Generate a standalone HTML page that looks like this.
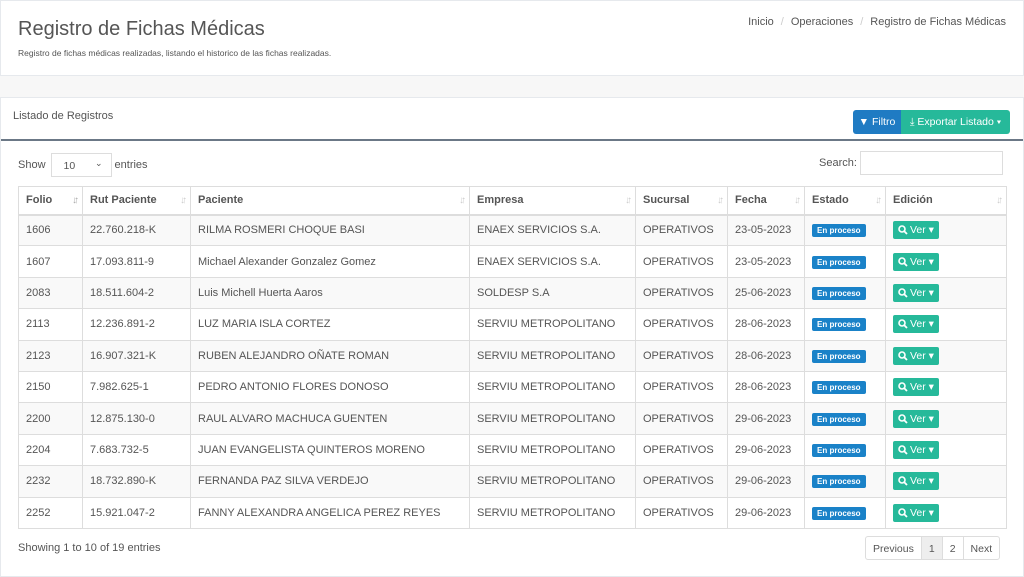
<!DOCTYPE html>
<html><head><meta charset="utf-8"><style>
*{box-sizing:border-box;margin:0;padding:0}
body{width:1024px;height:568px;overflow:hidden;background:#f7f7f7;font-family:"Liberation Sans",sans-serif;color:#73879c;font-size:11px}
.top{position:absolute;left:0;top:0;width:1024px;height:76px;background:#fff;border:1px solid #e6e9ed}
.top h1{position:absolute;left:17px;top:17px;font-size:20px;font-weight:normal;color:#555}
.top p{position:absolute;left:17px;top:47px;font-size:8.5px;color:#555}
.bc{position:absolute;right:17px;top:15px;font-size:11px;color:#555}
.bc span{color:#ccc;margin:0 7px}
.panel{position:absolute;left:0;top:97px;width:1024px;height:480px;background:#fff;border:1px solid #e6e9ed}
.ptitle{position:absolute;left:12px;top:12px;font-size:11px;color:#555}
.hr{position:absolute;left:0;top:41px;width:1022px;height:2px;background:#6b7886}
.btns{position:absolute;left:852px;top:12px;display:flex;height:24px}
.b1{background:#1f7bc3;color:#fff;width:48px;border-radius:3px 0 0 3px;display:flex;align-items:center;justify-content:center;font-size:10.5px}
.b2{background:#26b99a;color:#fff;width:109px;border-radius:0 3px 3px 0;display:flex;align-items:center;justify-content:center;font-size:10.5px}
.show{position:absolute;left:17px;top:55px;font-size:11px;color:#555;display:flex;align-items:center}
.sel{display:inline-block;width:61px;height:24px;border:1px solid #ddd;margin:0 3px 0 5px;padding:6px 0 0 12px;font-size:10.5px;position:relative}
.srch{position:absolute;left:818px;top:59px;color:#555}
.srch i{position:absolute;left:41px;top:-6px;width:143px;height:24px;border:1px solid #ddd}
table{position:absolute;left:17px;top:88px;border-collapse:collapse;font-size:11px;color:#555}
td,th{border:1px solid #ddd;padding:0 7px;text-align:left;white-space:nowrap}
th{height:28px;font-weight:bold;border-bottom:2px solid #ddd;position:relative}
th:after{content:"↓↑";position:absolute;right:6px;top:8px;font-size:10px;color:#ccc;letter-spacing:-3px}
th:first-child:after{color:#aaa}
td{height:31.4px}
tr:nth-child(even) td{background:#f9f9f9}
.ep{background:#1a82c8;color:#fff;font-size:8px;font-weight:bold;padding:2px 5px;border-radius:2px}
.ver{background:#26b99a;color:#fff;font-size:10.5px;padding:3px 5px;border-radius:2px;display:inline-flex;align-items:center;gap:2px}
.foot{position:absolute;left:17px;top:444px;color:#555}
.pg{position:absolute;left:864px;top:438px;display:flex;height:24px;border:1px solid #ddd;border-radius:3px;color:#555;font-size:10.5px}
.pg div{padding:6px 7px;border-left:1px solid #ddd}
.pg div:first-child{border:0}
</style></head><body>
<div class="top"><h1>Registro de Fichas Médicas</h1><p>Registro de fichas médicas realizadas, listando el historico de las fichas realizadas.</p>
<div class="bc">Inicio<span>/</span>Operaciones<span>/</span>Registro de Fichas Médicas</div></div>
<div class="panel">
<div class="ptitle">Listado de Registros</div>
<div class="btns"><div class="b1">▼ Filtro</div><div class="b2">⤓ Exportar Listado ▾</div></div>
<div class="hr"></div>
<div class="show">Show <span class="sel">10<span style="position:absolute;right:8px;top:4px;font-size:9px">⌄</span></span> entries</div>
<div class="srch">Search:<i></i></div>
<table>
<tr><th style="width:64px">Folio</th><th style="width:108px">Rut Paciente</th><th style="width:279px">Paciente</th><th style="width:166px">Empresa</th><th style="width:92px">Sucursal</th><th style="width:77px">Fecha</th><th style="width:81px">Estado</th><th style="width:121px">Edición</th></tr>
<tr><td>1606</td><td>22.760.218-K</td><td>RILMA ROSMERI CHOQUE BASI</td><td>ENAEX SERVICIOS S.A.</td><td>OPERATIVOS</td><td>23-05-2023</td><td><span class="ep">En proceso</span></td><td><span class="ver"><svg width="10" height="10" viewBox="0 0 10 10"><circle cx="4" cy="4" r="3" fill="none" stroke="#fff" stroke-width="1.6"/><path d="M6 6L9 9" stroke="#fff" stroke-width="1.8"/></svg>Ver ▾</span></td></tr>
<tr><td>1607</td><td>17.093.811-9</td><td>Michael Alexander Gonzalez Gomez</td><td>ENAEX SERVICIOS S.A.</td><td>OPERATIVOS</td><td>23-05-2023</td><td><span class="ep">En proceso</span></td><td><span class="ver"><svg width="10" height="10" viewBox="0 0 10 10"><circle cx="4" cy="4" r="3" fill="none" stroke="#fff" stroke-width="1.6"/><path d="M6 6L9 9" stroke="#fff" stroke-width="1.8"/></svg>Ver ▾</span></td></tr>
<tr><td>2083</td><td>18.511.604-2</td><td>Luis Michell Huerta Aaros</td><td>SOLDESP S.A</td><td>OPERATIVOS</td><td>25-06-2023</td><td><span class="ep">En proceso</span></td><td><span class="ver"><svg width="10" height="10" viewBox="0 0 10 10"><circle cx="4" cy="4" r="3" fill="none" stroke="#fff" stroke-width="1.6"/><path d="M6 6L9 9" stroke="#fff" stroke-width="1.8"/></svg>Ver ▾</span></td></tr>
<tr><td>2113</td><td>12.236.891-2</td><td>LUZ MARIA ISLA CORTEZ</td><td>SERVIU METROPOLITANO</td><td>OPERATIVOS</td><td>28-06-2023</td><td><span class="ep">En proceso</span></td><td><span class="ver"><svg width="10" height="10" viewBox="0 0 10 10"><circle cx="4" cy="4" r="3" fill="none" stroke="#fff" stroke-width="1.6"/><path d="M6 6L9 9" stroke="#fff" stroke-width="1.8"/></svg>Ver ▾</span></td></tr>
<tr><td>2123</td><td>16.907.321-K</td><td>RUBEN ALEJANDRO OÑATE ROMAN</td><td>SERVIU METROPOLITANO</td><td>OPERATIVOS</td><td>28-06-2023</td><td><span class="ep">En proceso</span></td><td><span class="ver"><svg width="10" height="10" viewBox="0 0 10 10"><circle cx="4" cy="4" r="3" fill="none" stroke="#fff" stroke-width="1.6"/><path d="M6 6L9 9" stroke="#fff" stroke-width="1.8"/></svg>Ver ▾</span></td></tr>
<tr><td>2150</td><td>7.982.625-1</td><td>PEDRO ANTONIO FLORES DONOSO</td><td>SERVIU METROPOLITANO</td><td>OPERATIVOS</td><td>28-06-2023</td><td><span class="ep">En proceso</span></td><td><span class="ver"><svg width="10" height="10" viewBox="0 0 10 10"><circle cx="4" cy="4" r="3" fill="none" stroke="#fff" stroke-width="1.6"/><path d="M6 6L9 9" stroke="#fff" stroke-width="1.8"/></svg>Ver ▾</span></td></tr>
<tr><td>2200</td><td>12.875.130-0</td><td>RAUL ALVARO MACHUCA GUENTEN</td><td>SERVIU METROPOLITANO</td><td>OPERATIVOS</td><td>29-06-2023</td><td><span class="ep">En proceso</span></td><td><span class="ver"><svg width="10" height="10" viewBox="0 0 10 10"><circle cx="4" cy="4" r="3" fill="none" stroke="#fff" stroke-width="1.6"/><path d="M6 6L9 9" stroke="#fff" stroke-width="1.8"/></svg>Ver ▾</span></td></tr>
<tr><td>2204</td><td>7.683.732-5</td><td>JUAN EVANGELISTA QUINTEROS MORENO</td><td>SERVIU METROPOLITANO</td><td>OPERATIVOS</td><td>29-06-2023</td><td><span class="ep">En proceso</span></td><td><span class="ver"><svg width="10" height="10" viewBox="0 0 10 10"><circle cx="4" cy="4" r="3" fill="none" stroke="#fff" stroke-width="1.6"/><path d="M6 6L9 9" stroke="#fff" stroke-width="1.8"/></svg>Ver ▾</span></td></tr>
<tr><td>2232</td><td>18.732.890-K</td><td>FERNANDA PAZ SILVA VERDEJO</td><td>SERVIU METROPOLITANO</td><td>OPERATIVOS</td><td>29-06-2023</td><td><span class="ep">En proceso</span></td><td><span class="ver"><svg width="10" height="10" viewBox="0 0 10 10"><circle cx="4" cy="4" r="3" fill="none" stroke="#fff" stroke-width="1.6"/><path d="M6 6L9 9" stroke="#fff" stroke-width="1.8"/></svg>Ver ▾</span></td></tr>
<tr><td>2252</td><td>15.921.047-2</td><td>FANNY ALEXANDRA ANGELICA PEREZ REYES</td><td>SERVIU METROPOLITANO</td><td>OPERATIVOS</td><td>29-06-2023</td><td><span class="ep">En proceso</span></td><td><span class="ver"><svg width="10" height="10" viewBox="0 0 10 10"><circle cx="4" cy="4" r="3" fill="none" stroke="#fff" stroke-width="1.6"/><path d="M6 6L9 9" stroke="#fff" stroke-width="1.8"/></svg>Ver ▾</span></td></tr>
</table>
<div class="foot">Showing 1 to 10 of 19 entries</div>
<div class="pg"><div>Previous</div><div style="background:#eee">1</div><div>2</div><div>Next</div></div>
</div>
</body></html>
